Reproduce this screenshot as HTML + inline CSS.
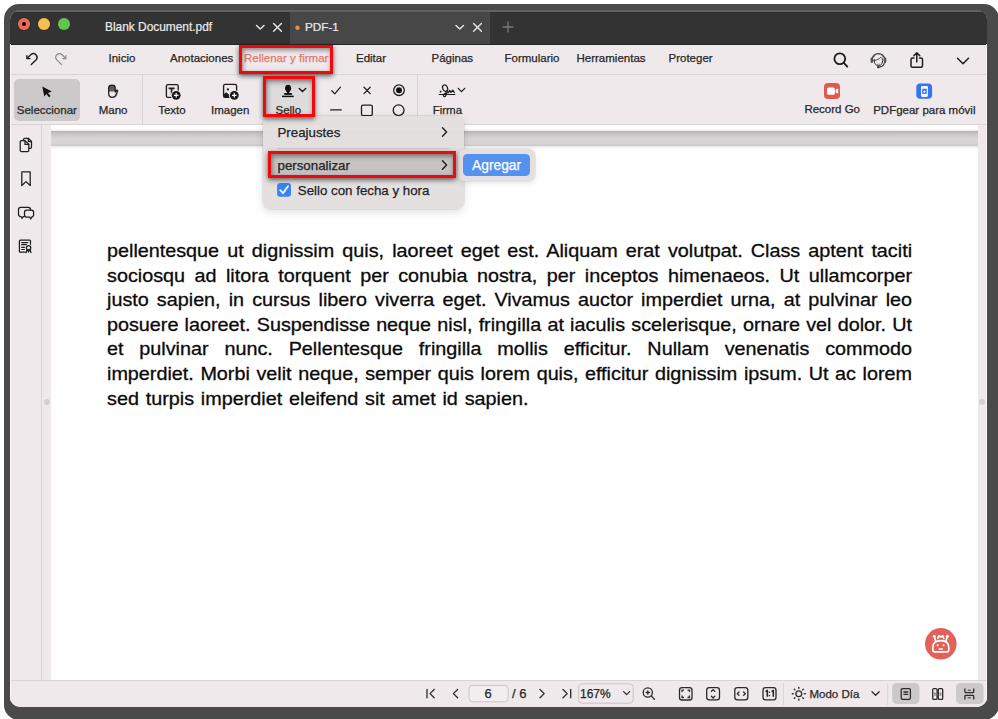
<!DOCTYPE html>
<html><head><meta charset="utf-8">
<style>
*{margin:0;padding:0;box-sizing:border-box}
html,body{width:998px;height:719px;overflow:hidden;background:#fff;font-family:"Liberation Sans",sans-serif;color:#2a2a2a}
body{position:relative}
.mi,.tb,.bt,.mn{-webkit-text-stroke:0.25px currentColor}
.tt{-webkit-text-stroke:0.2px currentColor}
.a{position:absolute}
svg{position:absolute;overflow:visible}
#frame{position:absolute;left:4px;top:4px;width:994.5px;height:716px;background:#4a4a4a;border-radius:15px}
#win{position:absolute;left:10px;top:10px;width:977px;height:697px;border-radius:10px;overflow:hidden;background:#efe9eb}
.tl{position:absolute;top:18.1px;width:12.2px;height:12.2px;border-radius:50%}
.tt{position:absolute;color:#ececec;font-size:11.7px;line-height:14px;white-space:nowrap}
.mi{position:absolute;top:51px;font-size:11.5px;line-height:14px;color:#262626;white-space:nowrap}
.tb{position:absolute;top:103px;font-size:11.5px;line-height:14px;color:#262626;white-space:nowrap}
.ln{position:absolute;left:0;width:749px;font-size:18.4px;line-height:20px;color:#0a0a0a;-webkit-text-stroke:0.3px #0a0a0a;white-space:nowrap;text-align:justify;text-align-last:justify}
.bt{position:absolute;font-size:12px;line-height:14px;color:#262626;white-space:nowrap}
.redbox{position:absolute;border:3px solid #f2070b;box-shadow:0 2px 5px rgba(0,0,0,.6), inset 1px 2px 5px rgba(0,0,0,.45)}
.mn{position:absolute;font-size:13.3px;line-height:16px;color:#222;white-space:nowrap}
</style></head><body>
<div id="frame"></div>
<div id="win">
  <!-- title bar -->
  <div class="a" style="left:0;top:0;width:977px;height:34px;background:#333333"></div>
  <div class="a" style="left:280px;top:0;width:200px;height:34px;background:#474747"></div>
  <div class="a" style="left:480px;top:0;width:497px;height:34px;background:#333333"></div>
  <div class="a" style="left:0;top:0;width:977px;height:1.5px;background:#626262"></div>
  <!-- menubar + toolbar -->
  <div class="a" style="left:0;top:34px;width:977px;height:1px;background:#262626"></div>
  <div class="a" style="left:0;top:64px;width:977px;height:1px;background:#dad5d5"></div>
  <div class="a" style="left:0;top:114px;width:977px;height:1px;background:#dad5d5"></div>
  <div class="a" style="left:132px;top:65px;width:1px;height:49px;background:#dad5d5"></div>
  <div class="a" style="left:407px;top:65px;width:1px;height:49px;background:#dad5d5"></div>
  <!-- sidebar -->
  <div class="a" style="left:31px;top:115px;width:1px;height:555px;background:#dad5d5"></div>
  <!-- page -->
  <div class="a" style="left:41px;top:115px;width:927px;height:555px;background:#fff"></div>
  <div class="a" style="left:41px;top:119px;width:927px;height:2px;background:linear-gradient(#fff,#ebe9e9)"></div>
  <div class="a" style="left:41px;top:121px;width:927px;height:15px;background:linear-gradient(#b4b0b1,#c9c5c6 18%,#dad6d7 55%,#d7d3d4 85%,#cdc9ca)"></div>
  <div class="a" style="left:41px;top:136px;width:927px;height:3px;background:linear-gradient(#e9e7e7,#fdfdfd)"></div>
  <!-- bottom bar -->
  <div class="a" style="left:0;top:670px;width:977px;height:1px;background:#dad5d5"></div>
  <div class="a" style="left:0;top:671px;width:977px;height:26px;background:#efe9eb"></div>
  <div class="a" style="left:0;top:34px;width:1px;height:663px;background:#f8f5f6"></div>
  <div class="a" style="left:976px;top:34px;width:1px;height:663px;background:#f8f5f6"></div>
</div>

<div class="a" style="left:43.8px;top:399.4px;width:5.8px;height:5.8px;border-radius:50%;background:#d5d1d2"></div>
<div class="a" style="left:979.1px;top:399.4px;width:5.8px;height:5.8px;border-radius:50%;background:#d5d1d2"></div>
<!-- traffic lights -->
<div class="tl" style="left:18.1px;background:#ee6a5f"><div class="a" style="left:4.15px;top:4.15px;width:3.9px;height:3.9px;border-radius:50%;background:#000"></div></div>
<div class="tl" style="left:38.1px;background:#f5bf4f"></div>
<div class="tl" style="left:58px;background:#61c554"></div>

<!-- tabs -->
<div class="tt" style="left:105px;top:20px;font-size:11.9px">Blank Document.pdf</div>
<svg style="left:0;top:0" width="998" height="44">
  <g fill="none" stroke="#e8e8e8" stroke-width="1.4" stroke-linecap="round" stroke-linejoin="round">
    <path d="M256.5 25.5 L260.2 29 L264 25.5"/>
    <path d="M273.6 23.5 L281.4 31.3 M281.4 23.5 L273.6 31.3"/>
    <path d="M456 25.5 L459.8 29 L463.5 25.5"/>
    <path d="M473.6 23.5 L481.4 31.3 M481.4 23.5 L473.6 31.3"/>
  </g>
  <path d="M508 21.5 V32.5 M502.5 27 H513.5" stroke="#7a7a7a" stroke-width="1.3" fill="none"/>
  <circle cx="297.5" cy="27.8" r="2.2" fill="#e8913a"/>
</svg>
<div class="tt" style="left:305px;top:20px">PDF-1</div>

<!-- menu bar -->
<svg style="left:0;top:44px" width="998" height="30">
  <g fill="none" stroke="#1e1e1e" stroke-width="1.4" stroke-linecap="round" stroke-linejoin="round">
    <path d="M31.3 20.6 L36.2 15.7 A3.7 3.7 0 0 0 31 10.5 L27.3 14.2"/>
    <path d="M26.9 11.6 V14.6 H29.9"/>
  </g>
  <g fill="none" stroke="#8a8a8a" stroke-width="1.2" stroke-linecap="round" stroke-linejoin="round">
    <path d="M61.5 20.6 L56.6 15.7 A3.7 3.7 0 0 1 61.8 10.5 L65.5 14.2"/>
    <path d="M65.9 11.6 V14.6 H62.9"/>
  </g>
  <g fill="none" stroke="#1a1a1a" stroke-width="1.8" stroke-linecap="round">
    <circle cx="839.8" cy="14.7" r="5.4"/>
    <path d="M843.8 18.8 L847.3 22.6"/>
  </g>
  <g fill="none" stroke-linecap="round" stroke-linejoin="round">
    <path d="M872.2 15 A6.3 6.6 0 0 1 884.6 15" stroke="#2a2a2a" stroke-width="1.3"/>
    <path d="M873.8 13.3 A4.8 4.6 0 0 1 883 13.3" stroke="#8a8a8a" stroke-width="0.8"/>
    <path d="M874.2 15.5 C874 20 876 21.6 878.4 21.6 C880.8 21.6 882.8 20 882.7 15.5" stroke="#2a2a2a" stroke-width="1"/>
    <path d="M873.5 16.8 C876.2 15.8 879 15.8 880.6 13.3 C881.3 14 882 14.8 883 15.5" stroke="#2a2a2a" stroke-width="0.9"/>
    <path d="M884.5 18.5 C884 21 881.5 23 878.6 23.2" stroke="#2a2a2a" stroke-width="1.1"/>
    <path d="M877 20.3 H879.6" stroke="#777" stroke-width="0.8"/>
  </g>
  <rect x="870.6" y="13.6" width="2.4" height="5.4" rx="1" fill="#555"/>
  <rect x="883.9" y="13.6" width="2.4" height="5.4" rx="1" fill="#555"/>
  <circle cx="878.2" cy="23.1" r="1.2" fill="#2a2a2a"/>
  <g fill="none" stroke="#1e1e1e" stroke-width="1.5" stroke-linecap="round" stroke-linejoin="round">
    <path d="M914 14 H912.5 A1.5 1.5 0 0 0 911 15.5 V21.8 A1.5 1.5 0 0 0 912.5 23.3 H921 A1.5 1.5 0 0 0 922.5 21.8 V15.5 A1.5 1.5 0 0 0 921 14 H919.5"/>
    <path d="M916.8 18 V9 M913.8 11.8 L916.8 8.8 L919.8 11.8"/>
    <path d="M957.5 14.2 L963 19.8 L968.5 14.2"/>
  </g>
</svg>
<div class="mi" style="left:108.5px">Inicio</div>
<div class="mi" style="left:170px">Anotaciones</div>
<div class="mi" style="left:244px;color:#e3786a">Rellenar y firmar</div>
<div class="mi" style="left:356px">Editar</div>
<div class="mi" style="left:431.5px">Páginas</div>
<div class="mi" style="left:504.5px">Formulario</div>
<div class="mi" style="left:576.5px">Herramientas</div>
<div class="mi" style="left:668.5px">Proteger</div>

<!-- toolbar -->
<div class="a" style="left:14.2px;top:79.3px;width:65.6px;height:41.3px;border-radius:5px;background:#cbc9c9"></div>
<svg style="left:0;top:74px" width="998" height="50">
  <!-- cursor -->
  <path d="M42.3 12.5 L51.8 17.6 L47.9 18.9 L50.6 22.1 L49 23.3 L46.4 20.1 L44.3 22.4 Z" fill="#111"/>
  <!-- hand -->
  <path d="M108.7 17.5 V14 C108.7 12.5 110.1 11.2 112 11.2 C113.9 11.2 115.2 12.5 115.2 14 V17.5 Z" fill="#5c5c5c"/>
  <path d="M108.7 17 V14 C108.7 12.5 110.1 11.2 112 11.2 C113.9 11.2 115.2 12.5 115.2 14 V18 L116.3 16.6 C116.8 15.9 117.8 16.2 117.6 17 L116.5 20 C115.8 22.2 114 23.3 112.3 23.3 C110 23.3 108.7 21.5 108.7 19.5 Z" fill="none" stroke="#1e1e1e" stroke-width="1.3" stroke-linejoin="round"/>
  <!-- texto -->
  <g fill="none" stroke="#1e1e1e" stroke-width="1.35">
    <path d="M173 23.4 H168 A1.6 1.6 0 0 1 166.4 21.8 V12.2 A1.6 1.6 0 0 1 168 10.6 H176.6 A1.6 1.6 0 0 1 178.2 12.2 V17"/>
    <path d="M168.6 14.4 H174.6 M171.6 14.4 V21" stroke-width="1.7"/>
  </g>
  <circle cx="176.2" cy="21.3" r="5.4" fill="#efe9eb"/><circle cx="176.2" cy="21.3" r="4.4" fill="#1a1a1a"/>
  <path d="M176.2 19 V23.6 M173.9 21.3 H178.5" stroke="#fff" stroke-width="1.2"/>
  <!-- imagen -->
  <g fill="none" stroke="#1e1e1e" stroke-width="1.35">
    <path d="M229.8 23.4 H225.2 A1.6 1.6 0 0 1 223.6 21.8 V12 A1.6 1.6 0 0 1 225.2 10.4 H235 A1.6 1.6 0 0 1 236.6 12 V17"/>
  </g>
  <circle cx="227.9" cy="15.4" r="1.1" fill="#1a1a1a"/>
  <path d="M223.6 23.4 V20.5 L226.2 18.3 L228.5 20.2 L229.6 19.5 V23.4 Z" fill="#1a1a1a"/>
  <circle cx="234.3" cy="21.3" r="5.4" fill="#efe9eb"/><circle cx="234.3" cy="21.3" r="4.4" fill="#1a1a1a"/>
  <path d="M234.3 19 V23.6 M232 21.3 H236.6" stroke="#fff" stroke-width="1.2"/>
  <!-- check x radio -->
  <g fill="none" stroke="#1e1e1e" stroke-width="1.3" stroke-linecap="round" stroke-linejoin="round">
    <path d="M331.8 16.8 L334.8 19.9 L340.4 13.2"/>
    <path d="M364 13.2 L370.2 19.6 M370.2 13.2 L364 19.6"/>
    <path d="M330.6 35.8 H341.3"/>
    <rect x="361.5" y="31.2" width="10.8" height="10.4" rx="1.6"/>
    <circle cx="398.6" cy="36.2" r="5.4"/>
    <circle cx="399" cy="16.2" r="5.3"/>
  </g>
  <circle cx="399" cy="16.2" r="3" fill="#111"/>
  <!-- firma -->
  <g fill="none" stroke="#1a1a1a" stroke-width="1.2" stroke-linecap="round" stroke-linejoin="round">
    <path d="M439.3 20.5 H454.8"/>
    <ellipse cx="445.1" cy="14.1" rx="2.4" ry="3.3" transform="rotate(-22 445.1 14.1)"/>
    <path d="M447.1 16.3 C446.9 18.5 446.5 20.6 445.6 21.9 C444.8 22.9 443.3 22.8 443.4 21.3 C443.5 19.9 445.5 18.9 447.8 18.3"/>
    <path d="M448.4 18.6 L449.6 16.3 L451 18.4 L452.7 16.1 L454.4 18.6"/>
    <path d="M458.2 14.3 L461.5 17.7 L464.8 14.3"/>
  </g>
  <rect x="439.8" y="16.8" width="1.6" height="1.7" fill="#111"/>
  <!-- record go -->
  <rect x="824" y="9" width="16" height="16" rx="4" fill="#e05a4f"/>
  <rect x="827" y="13.4" width="7.8" height="7.4" rx="1.5" fill="#fff"/>
  <path d="M835.6 15.8 L838.2 14.6 V19.6 L835.6 18.4 Z" fill="#fff"/>
  <!-- pdfgear mobile -->
  <rect x="916.3" y="9.4" width="15.8" height="15.4" rx="4" fill="#3274f4"/>
  <rect x="921" y="12" width="6.9" height="10.9" rx="1.3" fill="#f4f7ff"/>
  <rect x="922.2" y="14.8" width="4.5" height="5" fill="#3274f4"/>
  <path d="M924.45 16.2 L925.7 17.6 L924.45 19 L923.2 17.6 Z" fill="#fff"/>
</svg>
<div class="tb" style="left:16.8px">Seleccionar</div>
<div class="tb" style="left:98.7px">Mano</div>
<div class="tb" style="left:158.2px">Texto</div>
<div class="tb" style="left:211px">Imagen</div>
<div class="tb" style="left:432.7px">Firma</div>
<div class="tb" style="left:804.4px;top:102.2px">Record Go</div>
<div class="tb" style="left:873.2px">PDFgear para móvil</div>

<!-- sidebar icons -->
<svg style="left:0;top:125px" width="45" height="140">
  <g fill="none" stroke="#1e1e1e" stroke-width="1.25" stroke-linejoin="round" stroke-linecap="round">
    <path d="M23.5 15.5 V14.6 A1.3 1.3 0 0 1 24.8 13.3 H28.3 L31.5 16.5 V22 A1.3 1.3 0 0 1 30.2 23.3 H28.8"/>
    <path d="M28.3 13.3 V16.5 H31.5"/>
    <path d="M21.5 15.6 H25 L28.8 19.4 V25.2 A1.3 1.3 0 0 1 27.5 26.5 H21.5 A1.3 1.3 0 0 1 20.2 25.2 V16.9 A1.3 1.3 0 0 1 21.5 15.6 Z"/>
    <path d="M25 15.6 V19.4 H28.8"/>
    <path d="M21.8 46.8 H30.2 V60.5 L26 56.6 L21.8 60.5 Z"/>
    <path d="M30.5 85 V84.6 A2.2 2.2 0 0 0 28.3 82.4 H20.7 A2.2 2.2 0 0 0 18.5 84.6 V89.3 A2.2 2.2 0 0 0 20.7 91.5 H21 L22.1 93.3 L23.2 91.5 H24.4"/>
    <path d="M26.7 85.2 H31.4 A2.2 2.2 0 0 1 33.6 87.4 V89.8 A2.2 2.2 0 0 1 31.4 92 H31.8 L30.7 94 L29.6 92 H26.7 A2.2 2.2 0 0 1 24.5 89.8 V87.4 A2.2 2.2 0 0 1 26.7 85.2 Z"/>
    <path d="M25.2 127.2 H20.3 A0.9 0.9 0 0 1 19.4 126.3 V116 A0.9 0.9 0 0 1 20.3 115.1 H29.6 A0.9 0.9 0 0 1 30.5 116 V119.2"/>
    <path d="M21.7 117.6 H27.8 M21.7 119.7 H26.3 M21.7 122.4 H24.4 M21.7 124.5 H24.4" stroke-width="1.2"/>
    <circle cx="28.6" cy="122.7" r="2.2"/>
    <path d="M27.1 124.6 L26.2 127.6 M30.1 124.6 L31 127.6 M27.9 124.9 L28.6 127 M29.3 124.9 L28.6 127"/>
  </g>
</svg>

<!-- document text -->
<div class="a" style="left:107px;top:241px;width:749px;transform:scaleX(1.0748);transform-origin:0 0">
  <div class="ln" style="top:0px">pellentesque ut dignissim quis, laoreet eget est. Aliquam erat volutpat. Class aptent taciti</div>
  <div class="ln" style="top:24.6px">sociosqu ad litora torquent per conubia nostra, per inceptos himenaeos. Ut ullamcorper</div>
  <div class="ln" style="top:49.2px">justo sapien, in cursus libero viverra eget. Vivamus auctor imperdiet urna, at pulvinar leo</div>
  <div class="ln" style="top:73.8px">posuere laoreet. Suspendisse neque nisl, fringilla at iaculis scelerisque, ornare vel dolor. Ut</div>
  <div class="ln" style="top:98.4px">et pulvinar nunc. Pellentesque fringilla mollis efficitur. Nullam venenatis commodo</div>
  <div class="ln" style="top:123px">imperdiet. Morbi velit neque, semper quis lorem quis, efficitur dignissim ipsum. Ut ac lorem</div>
  <div class="ln" style="top:147.6px;text-align:left;text-align-last:left;word-spacing:1.25px">sed turpis imperdiet eleifend sit amet id sapien.</div>
</div>

<!-- FAB -->
<svg style="left:925px;top:628px" width="32" height="32">
  <circle cx="15.8" cy="15.8" r="15.8" fill="#e0625a"/>
  <g fill="none" stroke="#fff" stroke-width="1.6" stroke-linecap="round" stroke-linejoin="round">
    <path d="M7.8 19.5 C7.8 15 11 12.6 15.8 12.6 C20.6 12.6 23.8 15 23.8 19.5 V22.3 A1.6 1.6 0 0 1 22.2 23.9 H9.4 A1.6 1.6 0 0 1 7.8 22.3 Z"/>
    <path d="M10.8 13.4 L9.5 9.2 M20.8 13.4 L22.1 9.2"/>
    <path d="M12.8 10.6 L13.8 7.8 L15.8 9 L17.8 7.8 L18.8 10.6"/>
    <path d="M14.3 21 H17.3"/>
  </g>
  <circle cx="9.2" cy="8.3" r="1.5" fill="#fff"/>
  <circle cx="22.3" cy="8.3" r="1.5" fill="#fff"/>
  <circle cx="12.6" cy="17.2" r="1" fill="#fff"/>
  <circle cx="18.6" cy="17.2" r="1" fill="#fff"/>
</svg>

<!-- bottom bar -->
<svg style="left:0;top:680px" width="998" height="28">
  <g fill="none" stroke="#2a2a2a" stroke-width="1.3" stroke-linecap="round" stroke-linejoin="round">
    <path d="M427 9.5 V17.8 M434.2 9.5 L430 13.6 L434.2 17.8"/>
    <path d="M457.6 9.5 L453.4 13.6 L457.6 17.8"/>
    <path d="M540 9.5 L544.2 13.6 L540 17.8"/>
    <path d="M563 9.5 L567.2 13.6 L563 17.8 M570.7 9.5 V17.8"/>
    <path d="M623.6 11.6 L626.6 14.6 L629.6 11.6"/>
    <circle cx="647.8" cy="12.5" r="4.6"/>
    <path d="M651.2 15.9 L654.4 19.2"/>
    <path d="M647.8 10.8 V14.2 M646.1 12.5 H649.5"/>
    <rect x="679.5" y="7.6" width="12.5" height="12.4" rx="2.6"/>
    <path d="M682 11.6 V10.1 H683.5 M688 10.1 H689.5 V11.6 M689.5 16 V17.5 H688 M683.5 17.5 H682 V16"/>
    <rect x="706.7" y="7.6" width="12.8" height="12.2" rx="2.6"/>
    <path d="M711.4 11.3 L713.1 9.6 L714.8 11.3 M711.4 16.3 L713.1 18 L714.8 16.3"/>
    <rect x="734.8" y="7.6" width="13" height="12.2" rx="2.6"/>
    <path d="M739 12 L737.3 13.7 L739 15.4 M743.6 12 L745.3 13.7 L743.6 15.4"/>
    <rect x="763" y="7.6" width="13" height="12.2" rx="2.6"/>
    <circle cx="798.8" cy="13.7" r="2.9"/>
    <path d="M798.8 7.4 V8.2 M798.8 19.2 V20 M792.4 13.7 H793.2 M804.4 13.7 H805.2 M794.3 9.2 L794.8 9.7 M802.8 17.7 L803.3 18.2 M794.3 18.2 L794.8 17.7 M802.8 9.7 L803.3 9.2" stroke-width="1.5"/>
    <path d="M872 11.8 L875.6 15.3 L879.2 11.8"/>
  </g>
  <path d="M765.6 11.6 L767.3 10.4 V16.8 M771.6 11.6 L773.3 10.4 V16.8" fill="none" stroke="#2a2a2a" stroke-width="1.6" stroke-linejoin="round"/><circle cx="769.4" cy="12.3" r="0.8" fill="#2a2a2a"/><circle cx="769.4" cy="15.6" r="0.8" fill="#2a2a2a"/>
  <!-- page input -->
  <rect x="469" y="5.4" width="39.2" height="16.4" rx="3.5" fill="#f2eef0" stroke="#c9c3cf" stroke-width="1"/>
  <rect x="578.6" y="3.8" width="54.6" height="19.4" rx="3.5" fill="none" stroke="#c9c3cf" stroke-width="1"/>
  <path d="M783.5 3 V25 M887.7 3 V25" stroke="#dad5d5" stroke-width="1"/>
  <rect x="892.2" y="2.9" width="27.2" height="21.2" rx="4.5" fill="#cbc9c9"/>
  <rect x="956" y="2.9" width="27.5" height="21.2" rx="4.5" fill="#cbc9c9"/>
  <g fill="none" stroke="#2a2a2a" stroke-width="1.3" stroke-linejoin="round">
    <rect x="901.2" y="8.6" width="9.2" height="10.8" rx="1.4"/>
    <path d="M903.4 12 H908.2 M903.4 14.4 H908.2"/>
    <rect x="932.7" y="8.6" width="4.4" height="10.8" rx="1.2"/>
    <rect x="938.3" y="8.6" width="4.4" height="10.8" rx="1.2"/>
    <path d="M964.9 8.4 V11.8 A0.8 0.8 0 0 0 965.7 12.6 H972.9 A0.8 0.8 0 0 0 973.7 11.8 V8.4"/>
    <path d="M964.9 19.6 V16.2 A0.8 0.8 0 0 1 965.7 15.4 H972.9 A0.8 0.8 0 0 1 973.7 16.2 V19.6"/>
  </g>
  <path d="M934.1 13.2 H935.7 M934.1 15 H935.7 M939.7 13.2 H941.3 M939.7 15 H941.3 M967.6 10.2 H971 M967.6 17.8 H971" stroke="#2a2a2a" stroke-width="0.9"/>
</svg>
<div class="bt" style="left:484.6px;top:687px;font-size:13px">6</div>
<div class="bt" style="left:512px;top:687px;font-size:13px">/ 6</div>
<div class="bt" style="left:580px;top:687px;font-size:12px">167%</div>
<div class="bt" style="left:809.5px;top:687px;font-size:11.5px">Modo Día</div>

<!-- popup menu -->
<div class="a" style="left:262.5px;top:116px;width:201px;height:93px;border-radius:7px;background:rgba(228,223,223,0.97);box-shadow:0 0 0 0.5px rgba(0,0,0,.12),0 3px 10px rgba(0,0,0,.12)"></div>
<div class="a" style="left:277px;top:148px;width:172px;height:1px;background:#cfcaca"></div>
<div class="a" style="left:268px;top:151px;width:188px;height:26.7px;background:#c7c3c3"></div>
<div class="mn" style="left:277.5px;top:125.2px">Preajustes</div>
<div class="mn" style="left:277.5px;top:158px">personalizar</div>
<div class="mn" style="left:297.8px;top:183px">Sello con fecha y hora</div>
<svg style="left:0;top:110px" width="998" height="100">
  <g fill="none" stroke="#1e1e1e" stroke-width="1.4" stroke-linecap="round" stroke-linejoin="round">
    <path d="M442.5 17.8 L446.6 22 L442.5 26.2"/>
    <path d="M442.5 50.8 L446.6 55 L442.5 59.2"/>
  </g>
  <rect x="277.1" y="73" width="13.9" height="13.8" rx="3.2" fill="#3b82f6"/>
  <path d="M280.2 80.2 L283 83.2 L288 76.2" fill="none" stroke="#fff" stroke-width="1.8" stroke-linecap="round" stroke-linejoin="round"/>
</svg>
<!-- submenu -->
<div class="a" style="left:458.2px;top:149px;width:76.8px;height:32px;border-radius:6px;background:rgba(228,223,223,0.97);box-shadow:0 0 0 0.5px rgba(0,0,0,.12),0 2px 6px rgba(0,0,0,.1)"></div>
<div class="a" style="left:463.2px;top:154px;width:66.8px;height:22px;border-radius:4.5px;background:#5591ee"></div>
<div class="mn" style="left:472px;top:157.5px;color:#fff;font-size:13.8px">Agregar</div>

<!-- sello -->
<div class="a" style="left:266px;top:79px;width:46px;height:35px;background:linear-gradient(#cfcdcd,#dddbdb 30%,#dedcdc)"></div>
<svg style="left:0;top:74px" width="998" height="50">
  <path d="M288.1 10.8 C286.2 10.8 285 12.3 285 14.3 C285 16.1 286 17.3 287 18.3 V18.9 H285.2 A0.9 0.9 0 0 0 284.3 19.8 V20.6 H291.9 V19.8 A0.9 0.9 0 0 0 291 18.9 H289.2 V18.3 C290.2 17.3 291.2 16.1 291.2 14.3 C291.2 12.3 290 10.8 288.1 10.8 Z" fill="#111"/><rect x="284.3" y="19" width="7.6" height="1.8" rx="0.6" fill="#111"/>
  <path d="M282 22.4 H293.8" stroke="#111" stroke-width="1.5"/>
  <path d="M299.3 14.4 L302.5 17.6 L305.7 14.4" fill="none" stroke="#1a1a1a" stroke-width="1.45" stroke-linecap="round" stroke-linejoin="round"/>
</svg>
<div class="tb" style="left:275.5px">Sello</div>
<!-- red annotation boxes -->
<div class="redbox" style="left:239px;top:44.8px;width:94px;height:29px"></div>
<div class="redbox" style="left:263px;top:76px;width:52px;height:41px"></div>
<div class="redbox" style="left:268px;top:151px;width:188.3px;height:26.7px"></div>
</body></html>
